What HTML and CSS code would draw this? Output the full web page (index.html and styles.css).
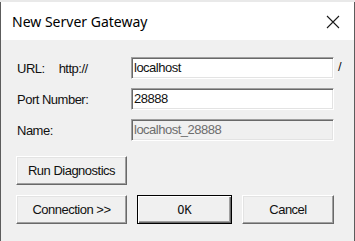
FILE: index.html
```html
<!DOCTYPE html>
<html lang="en">
<head>
    <meta charset="UTF-8">
    <title>New Server Gateway</title>
    <link rel="stylesheet" href="styles.css">
</head>
<body>
    <div class="window">
        <div class="titlebar">
            <span class="title">New Server Gateway</span>
            <svg class="close" width="14" height="14" viewBox="0 0 14 14">
                <path d="M1 1 L13 13 M13 1 L1 13" stroke="#1a1a1a" stroke-width="1.1" fill="none"/>
            </svg>
        </div>

        <div class="content">
            <div class="row">
                <div class="label">
                    <span>URL:</span>
                    <span class="prefix">http://</span>
                </div>
                <div class="field">localhost</div>
                <span class="suffix">/</span>
            </div>
            <div class="row">
                <div class="label">Port Number:</div>
                <div class="field">28888</div>
            </div>
            <div class="row">
                <div class="label">Name:</div>
                <div class="field disabled">localhost_28888</div>
            </div>

            <div class="btn diag">Run Diagnostics</div>

            <div class="actions">
                <div class="btn wide">Connection &gt;&gt;</div>
                <div class="btn default">OK</div>
                <div class="btn">Cancel</div>
            </div>
        </div>
    </div>
</body>
</html>
```

FILE: styles.css
```css
body {
    margin: 0;
    background: #e9e9e9;
    font-family: 'Liberation Sans', Arial, sans-serif;
    font-size: 13px;
    letter-spacing: -0.5px;
    color: #111;
}

.window {
    width: 353px;
    height: 239px;
    margin-top: 2px;
    background: #f0f0f0;
    border-left: 1px solid #5c5c5c;
    border-right: 1px solid #5c5c5c;
    overflow: hidden;
}

.titlebar {
    height: 38px;
    background: #fff;
    display: flex;
    align-items: center;
    justify-content: space-between;
    padding: 0 14px 0 11px;
}

.title {
    font-family: 'Noto Sans', 'Open Sans', sans-serif;
    font-size: 14px;
    letter-spacing: 0;
    color: #000;
    margin-top: 1px;
}

.close {
    margin-top: 2px;
}

.content {
    padding: 17px 0 0 15px;
}

/* form rows */
.row {
    display: flex;
    align-items: center;
    height: 22px;
    margin-bottom: 9px;
}

.label {
    width: 114px;
    padding-left: 1px;
    display: flex;
}

.prefix {
    margin-left: 14px;
}

.field {
    width: 199px;
    height: 20px;
    line-height: 20px;
    padding-left: 2px;
    background: #fff;
    border-top: 1px solid #a0a0a0;
    border-left: 1px solid #a0a0a0;
    border-bottom: 1px solid #fff;
    border-right: 1px solid #fff;
    box-shadow: inset 1px 1px 0 #696969, inset -1px -1px 0 #e3e3e3;
}

.field.disabled {
    background: #f0f0f0;
    color: #6d6d6d;
}

.suffix {
    margin-left: 4px;
    margin-top: -4px;
}

/* buttons */
.btn {
    box-sizing: border-box;
    height: 29px;
    width: 92px;
    display: flex;
    align-items: center;
    justify-content: center;
    background: #f0f0f0;
    border-top: 1px solid #fff;
    border-left: 1px solid #fff;
    border-bottom: 1px solid #696969;
    border-right: 1px solid #696969;
    box-shadow: inset -1px -1px 0 #a0a0a0, inset 1px 1px 0 #e3e3e3;
}

.btn.diag {
    width: 111px;
    margin-top: 15px;
}

.btn.wide {
    width: 111px;
}

.btn.default {
    width: 95px;
    border: 1px solid #000;
    box-shadow: inset 1px 1px 0 #fff, inset -1px -1px 0 #696969, inset -2px -2px 0 #a0a0a0;
    font-family: 'DejaVu Sans Mono', monospace;
    font-size: 12px;
    letter-spacing: 0;
}

.actions {
    display: flex;
    gap: 10px;
    margin-top: 10px;
}
```
